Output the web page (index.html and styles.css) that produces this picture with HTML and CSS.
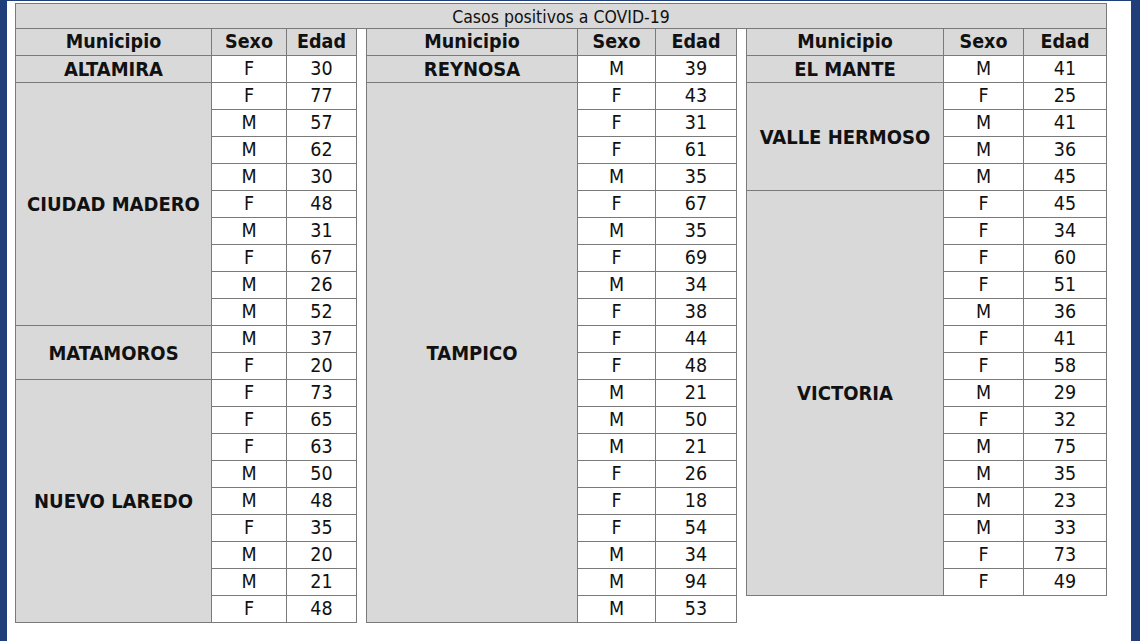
FILE: index.html
```html
<!DOCTYPE html>
<html lang="es">
<head>
<meta charset="utf-8">
<title>Casos positivos a COVID-19</title>
<link rel="stylesheet" href="styles.css">
</head>
<body>
<div class="page">
  <div class="title">Casos positivos a COVID-19</div>
  <div class="tables">
    <table class="t t1">
      <colgroup><col class="c-mun"><col class="c-sex"><col class="c-age"></colgroup>
      <tr class="head"><th>Municipio</th><th>Sexo</th><th>Edad</th></tr>
      <tr><td class="mun">ALTAMIRA</td><td>F</td><td>30</td></tr>
      <tr><td class="mun" rowspan="9">CIUDAD MADERO</td><td>F</td><td>77</td></tr>
      <tr><td>M</td><td>57</td></tr>
      <tr><td>M</td><td>62</td></tr>
      <tr><td>M</td><td>30</td></tr>
      <tr><td>F</td><td>48</td></tr>
      <tr><td>M</td><td>31</td></tr>
      <tr><td>F</td><td>67</td></tr>
      <tr><td>M</td><td>26</td></tr>
      <tr><td>M</td><td>52</td></tr>
      <tr><td class="mun" rowspan="2">MATAMOROS</td><td>M</td><td>37</td></tr>
      <tr><td>F</td><td>20</td></tr>
      <tr><td class="mun" rowspan="9">NUEVO LAREDO</td><td>F</td><td>73</td></tr>
      <tr><td>F</td><td>65</td></tr>
      <tr><td>F</td><td>63</td></tr>
      <tr><td>M</td><td>50</td></tr>
      <tr><td>M</td><td>48</td></tr>
      <tr><td>F</td><td>35</td></tr>
      <tr><td>M</td><td>20</td></tr>
      <tr><td>M</td><td>21</td></tr>
      <tr><td>F</td><td>48</td></tr>
    </table>
    <table class="t t2">
      <colgroup><col class="c-mun"><col class="c-sex"><col class="c-age"></colgroup>
      <tr class="head"><th>Municipio</th><th>Sexo</th><th>Edad</th></tr>
      <tr><td class="mun">REYNOSA</td><td>M</td><td>39</td></tr>
      <tr><td class="mun" rowspan="20">TAMPICO</td><td>F</td><td>43</td></tr>
      <tr><td>F</td><td>31</td></tr>
      <tr><td>F</td><td>61</td></tr>
      <tr><td>M</td><td>35</td></tr>
      <tr><td>F</td><td>67</td></tr>
      <tr><td>M</td><td>35</td></tr>
      <tr><td>F</td><td>69</td></tr>
      <tr><td>M</td><td>34</td></tr>
      <tr><td>F</td><td>38</td></tr>
      <tr><td>F</td><td>44</td></tr>
      <tr><td>F</td><td>48</td></tr>
      <tr><td>M</td><td>21</td></tr>
      <tr><td>M</td><td>50</td></tr>
      <tr><td>M</td><td>21</td></tr>
      <tr><td>F</td><td>26</td></tr>
      <tr><td>F</td><td>18</td></tr>
      <tr><td>F</td><td>54</td></tr>
      <tr><td>M</td><td>34</td></tr>
      <tr><td>M</td><td>94</td></tr>
      <tr><td>M</td><td>53</td></tr>
    </table>
    <table class="t t3">
      <colgroup><col class="c-mun"><col class="c-sex"><col class="c-age"></colgroup>
      <tr class="head"><th>Municipio</th><th>Sexo</th><th>Edad</th></tr>
      <tr><td class="mun">EL MANTE</td><td>M</td><td>41</td></tr>
      <tr><td class="mun" rowspan="4">VALLE HERMOSO</td><td>F</td><td>25</td></tr>
      <tr><td>M</td><td>41</td></tr>
      <tr><td>M</td><td>36</td></tr>
      <tr><td>M</td><td>45</td></tr>
      <tr><td class="mun" rowspan="15">VICTORIA</td><td>F</td><td>45</td></tr>
      <tr><td>F</td><td>34</td></tr>
      <tr><td>F</td><td>60</td></tr>
      <tr><td>F</td><td>51</td></tr>
      <tr><td>M</td><td>36</td></tr>
      <tr><td>F</td><td>41</td></tr>
      <tr><td>F</td><td>58</td></tr>
      <tr><td>M</td><td>29</td></tr>
      <tr><td>F</td><td>32</td></tr>
      <tr><td>M</td><td>75</td></tr>
      <tr><td>M</td><td>35</td></tr>
      <tr><td>M</td><td>23</td></tr>
      <tr><td>M</td><td>33</td></tr>
      <tr><td>F</td><td>73</td></tr>
      <tr><td>F</td><td>49</td></tr>
    </table>
  </div>
</div>
</body>
</html>
```

FILE: styles.css
```css
html, body {
  margin: 0;
  padding: 0;
}

body {
  background: #1f3e7a;
  width: 1140px;
  height: 641px;
  overflow: hidden;
  font-family: "DejaVu Sans Condensed", "DejaVu Sans", sans-serif;
  font-stretch: condensed;
  color: #111;
}

.page {
  margin: 1px 0 0 7px;
  width: 1124px;
  height: 640px;
  background: #fff;
  box-sizing: border-box;
  padding: 2px 0 0 8px;
}

.title {
  box-sizing: border-box;
  width: 1092px;
  height: 26px;
  background: #d9d9d9;
  border: 1px solid #7a7a7a;
  text-align: center;
  font-size: 17.5px;
  line-height: 26px;
}

.tables {
  display: flex;
  gap: 9px;
  align-items: flex-start;
  margin-top: -1px;
}

.t {
  border-collapse: collapse;
  table-layout: fixed;
  background: #fff;
}

.t th,
.t td {
  border: 1px solid #7a7a7a;
  padding: 0;
  height: 26px;
  text-align: center;
  vertical-align: middle;
  white-space: nowrap;
  line-height: 26px;
}

.t th {
  background: #d9d9d9;
  font-weight: bold;
  font-size: 19.5px;
}

.t td {
  font-size: 19.5px;
}

.t td.mun {
  background: #d9d9d9;
  font-weight: bold;
  font-size: 20px;
}

.t1 { width: 341px; }
.t1 .c-mun { width: 196px; }
.t1 .c-sex { width: 75px; }
.t1 .c-age { width: 70px; }

.t2 { width: 370px; }
.t2 .c-mun { width: 211px; }
.t2 .c-sex { width: 78px; }
.t2 .c-age { width: 81px; }

.t3 { width: 360px; }
.t3 .c-mun { width: 197px; }
.t3 .c-sex { width: 80px; }
.t3 .c-age { width: 83px; }
```
